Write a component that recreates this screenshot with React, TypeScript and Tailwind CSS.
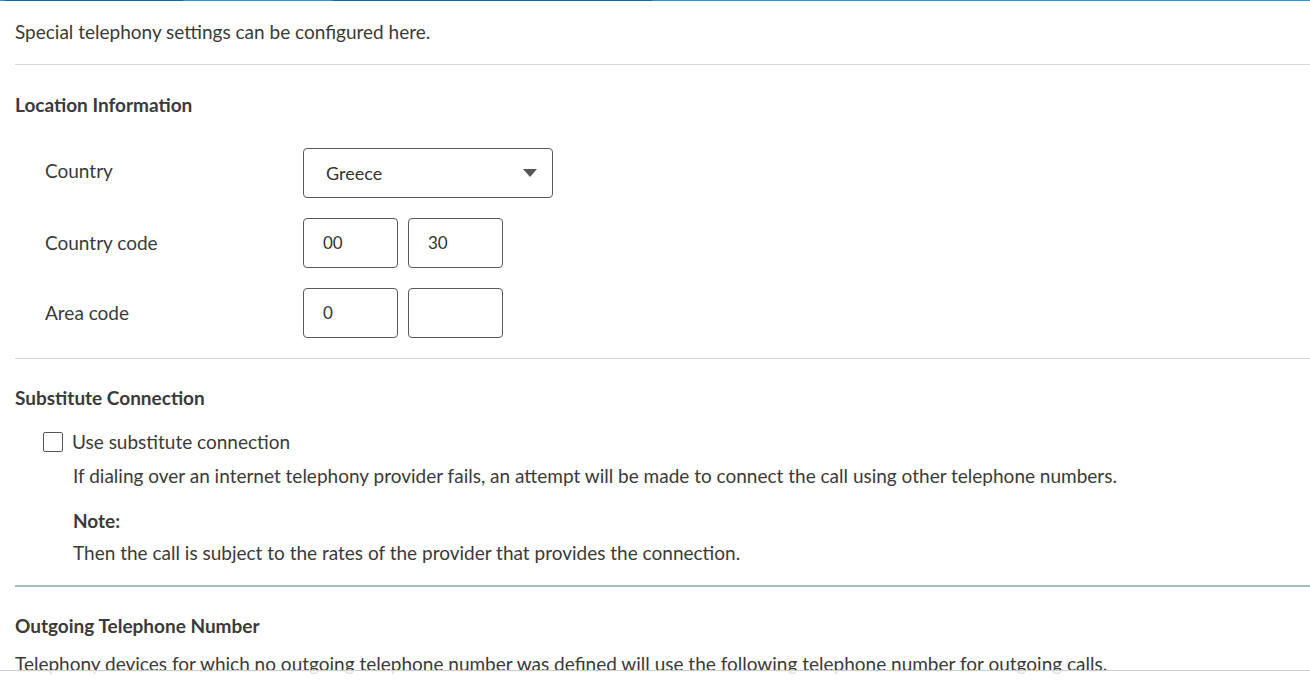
import React from 'react';

const Separator: React.FC<{ strong?: boolean }> = ({ strong }) =>
  strong ? (
    <div className="ml-[15px] h-[2px] bg-[#a6b9b5]" />
  ) : (
    <div className="ml-[15px] h-px bg-[#d6d6d6]" />
  );

const Field: React.FC<{ value?: string }> = ({ value = '' }) => (
  <div className="w-[95px] h-[50px] rounded-[4px] border border-[#5a5a5a] bg-white flex items-center pl-[19px] text-[17px] text-[#333]">
    {value}
  </div>
);

export default function App() {
  return (
    <div
      className="relative w-[1310px] h-[681px] overflow-hidden bg-white text-[#3a3a3a] text-[19px]"
      style={{ fontFamily: 'Lato, "Open Sans", sans-serif' }}
    >
      {/* progress line */}
      <div className="flex h-px">
        <div className="w-[5px] bg-[#2a93e0]" />
        <div className="w-[178px] bg-[#0068b4]" />
        <div className="w-[150px] bg-[#2a93e0]" />
        <div className="w-[319px] bg-[#0068b4]" />
        <div className="flex-1 bg-[#2a93e0]" />
      </div>

      <p className="pl-[15px] pt-[19px] pb-[21px] leading-[23px]">
        Special telephony settings can be configured here.
      </p>
      <Separator />

      <h2 className="pl-[15px] pt-[28px] leading-[23px] font-bold">Location Information</h2>

      <div className="pt-[32px] pl-[45px] flex flex-col gap-[20px]">
        <div className="flex items-center">
          <span className="w-[258px] -mt-[3px]">Country</span>
          <div className="w-[250px] h-[50px] rounded-[4px] border border-[#5a5a5a] flex items-center justify-between pl-[22px] pr-[15px] text-[18px] text-[#333]">
            <span className="mt-[1px]">Greece</span>
            <svg width="14" height="8" viewBox="0 0 14 8">
              <path d="M0 0h14L7 8z" fill="#555" />
            </svg>
          </div>
        </div>
        <div className="flex items-center">
          <span className="w-[258px]">Country code</span>
          <div className="flex gap-[10px]">
            <Field value="00" />
            <Field value="30" />
          </div>
        </div>
        <div className="flex items-center">
          <span className="w-[258px]">Area code</span>
          <div className="flex gap-[10px]">
            <Field value="0" />
            <Field />
          </div>
        </div>
      </div>

      <div className="pt-[20px]">
        <Separator />
      </div>

      <h2 className="pl-[15px] pt-[27px] leading-[23px] font-bold">Substitute Connection</h2>

      <div className="pl-[43px] pt-[22px]">
        <label className="flex items-center gap-[9px] leading-[23px]">
          <span className="w-[20px] h-[20px] rounded-[2px] border border-[#555] bg-white" />
          <span className="-mt-[1px]">Use substitute connection</span>
        </label>
        <div className="pl-[30px] pt-[11px] leading-[23px]">
          <p>
            If dialing over an internet telephony provider fails, an attempt will be made to connect the call using other
            telephone numbers.
          </p>
          <p className="pt-[22px] font-bold">Note:</p>
          <p className="pt-[9px]">Then the call is subject to the rates of the provider that provides the connection.</p>
        </div>
      </div>

      <div className="pt-[21px]">
        <Separator strong />
      </div>

      <h2 className="pl-[15px] pt-[27px] leading-[23px] font-bold">Outgoing Telephone Number</h2>
      <p className="pl-[15px] pt-[15px] leading-[23px]">
        Telephony devices for which no outgoing telephone number was defined will use the following telephone number for
        outgoing calls.
      </p>

      {/* footer overlay */}
      <div className="absolute left-0 right-0 top-[670px] bottom-0 border-t border-[#cfcfcf] bg-white/85" />
    </div>
  );
}
